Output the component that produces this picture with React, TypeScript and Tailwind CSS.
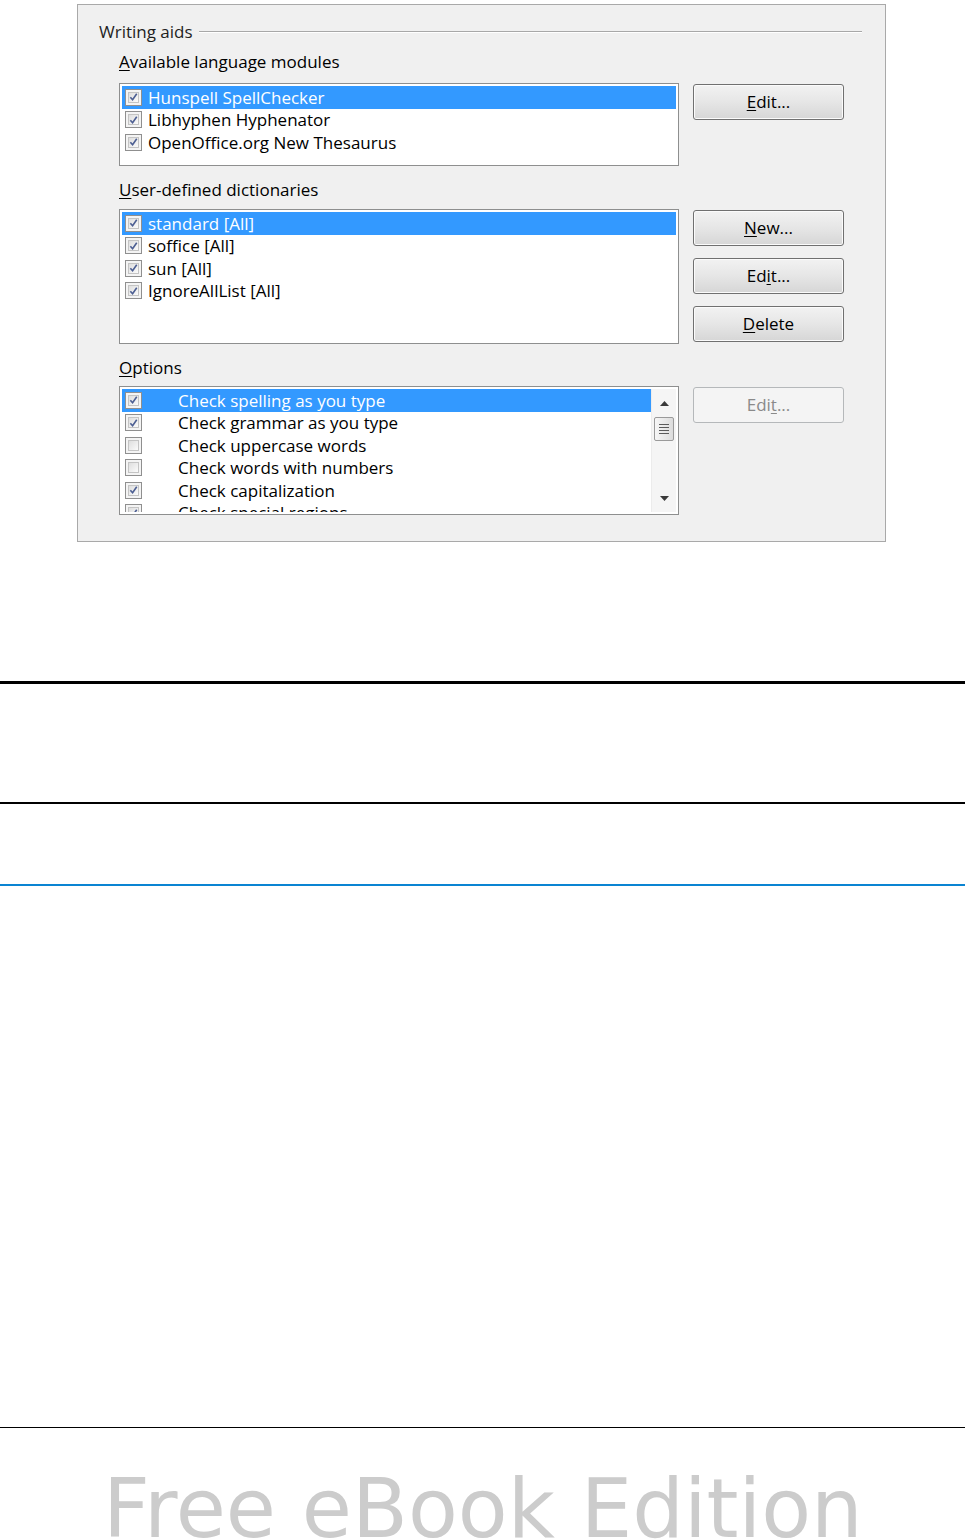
import React from 'react';

const font = { fontFamily: '"Open Sans", "Noto Sans", sans-serif' };

type Item = { label: string; checked: boolean };

const modules: Item[] = [
  { label: 'Hunspell SpellChecker', checked: true },
  { label: 'Libhyphen Hyphenator', checked: true },
  { label: 'OpenOffice.org New Thesaurus', checked: true },
];

const dictionaries: Item[] = [
  { label: 'standard [All]', checked: true },
  { label: 'soffice [All]', checked: true },
  { label: 'sun [All]', checked: true },
  { label: 'IgnoreAllList [All]', checked: true },
];

const options: Item[] = [
  { label: 'Check spelling as you type', checked: true },
  { label: 'Check grammar as you type', checked: true },
  { label: 'Check uppercase words', checked: false },
  { label: 'Check words with numbers', checked: false },
  { label: 'Check capitalization', checked: true },
  { label: 'Check special regions', checked: true },
];

function Checkbox({ checked }: { checked: boolean }) {
  return (
    <div className="w-[17px] h-[17px] shrink-0 border border-[#8f8f8f] bg-[#f4f4f4] p-[2px]">
      <div className="w-full h-full border border-[#c4c4c4] bg-gradient-to-br from-[#dedede] to-[#fbfbfb] flex items-center justify-center">
        {checked && (
          <svg width="10" height="10" viewBox="0 0 10 10">
            <path d="M1.5 5.2 L4 8 L8.6 1.4" fill="none" stroke="#4c5e92" strokeWidth="1.8" />
          </svg>
        )}
      </div>
    </div>
  );
}

function Row({ item, selected, textIndent }: { item: Item; selected: boolean; textIndent: string }) {
  return (
    <div
      className={`h-[22.5px] flex items-center pl-[3px] ${selected ? 'bg-[#3399ff] text-white' : 'text-black'}`}
    >
      <Checkbox checked={item.checked} />
      <span className={`${textIndent} whitespace-nowrap leading-none`}>{item.label}</span>
    </div>
  );
}

function Button({ children, disabled }: { children: React.ReactNode; disabled?: boolean }) {
  return (
    <div
      className={`w-[151px] h-[36px] rounded-[3px] border flex items-center justify-center ${
        disabled
          ? 'border-[#b5b8ba] bg-[#f4f4f4] text-[#8a8a8a]'
          : 'border-[#707070] bg-gradient-to-b from-[#f2f2f2] via-[#e6e6e6] to-[#d6d6d6] text-black shadow-[inset_0_0_0_1px_#fbfbfb]'
      }`}
    >
      {children}
    </div>
  );
}

function U({ children }: { children: React.ReactNode }) {
  return <span className="underline underline-offset-2 decoration-1">{children}</span>;
}

export default function App() {
  return (
    <div className="w-[965px] h-[1539px] overflow-hidden bg-white text-[17px]" style={font}>
      {/* dialog */}
      <div className="pt-[4px] pl-[77px]">
        <div className="w-[809px] h-[538px] bg-[#f0f0f0] border border-[#a9a9a9] pt-[16px] pl-[21px] pr-[23px]">
          <div className="flex items-center h-[22px] text-[#1e1e1e]">
            <span className="pr-[6px]">Writing aids</span>
            <div className="flex-1 h-[2px] border-t border-[#a8a8a8] border-b border-b-white" />
          </div>

          <div className="pl-[20px]">
            <div className="mt-[8px] h-[22px] flex items-center">
              <span><U>A</U>vailable language modules</span>
            </div>
            <div className="mt-[10px] flex gap-[14px]">
              <div className="w-[560px] h-[83px] border border-[#8e8f8f] bg-white p-[2px] pt-[2px]">
                {modules.map((m, i) => (
                  <Row key={i} item={m} selected={i === 0} textIndent="ml-[6px]" />
                ))}
              </div>
              <div className="pt-[1px]">
                <Button><U>E</U>dit...</Button>
              </div>
            </div>

            <div className="mt-[13px] h-[22px] flex items-center">
              <span><U>U</U>ser-defined dictionaries</span>
            </div>
            <div className="mt-[8px] flex gap-[14px]">
              <div className="w-[560px] h-[135px] border border-[#8e8f8f] bg-white p-[2px]">
                {dictionaries.map((m, i) => (
                  <Row key={i} item={m} selected={i === 0} textIndent="ml-[6px]" />
                ))}
              </div>
              <div className="pt-[1px] flex flex-col gap-[12px]">
                <Button><U>N</U>ew...</Button>
                <Button>Ed<U>i</U>t...</Button>
                <Button><U>D</U>elete</Button>
              </div>
            </div>

            <div className="mt-[13px] h-[22px] flex items-center">
              <span><U>O</U>ptions</span>
            </div>
            <div className="mt-[7px] flex gap-[14px]">
              <div className="w-[560px] h-[129px] border border-[#8e8f8f] bg-white p-[2px] flex">
                <div className="flex-1 overflow-hidden">
                  {options.map((m, i) => (
                    <Row key={i} item={m} selected={i === 0} textIndent="ml-[36px]" />
                  ))}
                </div>
                <div className="w-[25px] h-full bg-[#f5f5f5] border-l border-[#ececec] flex flex-col items-center">
                  <div className="h-[28px] flex items-center justify-center">
                    <svg width="9" height="5" viewBox="0 0 9 5">
                      <path d="M0 5 L4.5 0 L9 5 Z" fill="#3a3a3a" />
                    </svg>
                  </div>
                  <div className="w-[20px] h-[24px] rounded-[2px] border border-[#9a9a9a] bg-gradient-to-r from-[#f6f6f6] to-[#dcdcdc] flex flex-col items-center justify-center gap-[2px]">
                    <div className="w-[10px] h-[1px] bg-[#5a5a5a]" />
                    <div className="w-[10px] h-[1px] bg-[#5a5a5a]" />
                    <div className="w-[10px] h-[1px] bg-[#5a5a5a]" />
                    <div className="w-[10px] h-[1px] bg-[#5a5a5a]" />
                  </div>
                  <div className="flex-1" />
                  <div className="h-[28px] flex items-center justify-center">
                    <svg width="9" height="5" viewBox="0 0 9 5">
                      <path d="M0 0 L9 0 L4.5 5 Z" fill="#3a3a3a" />
                    </svg>
                  </div>
                </div>
              </div>
              <div className="pt-[1px]">
                <Button disabled>Edi<U>t</U>...</Button>
              </div>
            </div>
          </div>
        </div>
      </div>

      {/* page rules */}
      <div className="mt-[139px] h-[3px] bg-black" />
      <div className="mt-[118px] h-[2px] bg-black" />
      <div className="mt-[80px] h-[2px] bg-[#0a84d2]" />
      <div className="mt-[541px] h-[1px] bg-black" />

      <div
        className="mt-[40px] pl-[103px] text-[81.5px] leading-none text-[#cccccc] whitespace-nowrap"
        style={{ fontFamily: '"DejaVu Sans", sans-serif' }}
      >
        Free eBook Edition
      </div>
    </div>
  );
}
